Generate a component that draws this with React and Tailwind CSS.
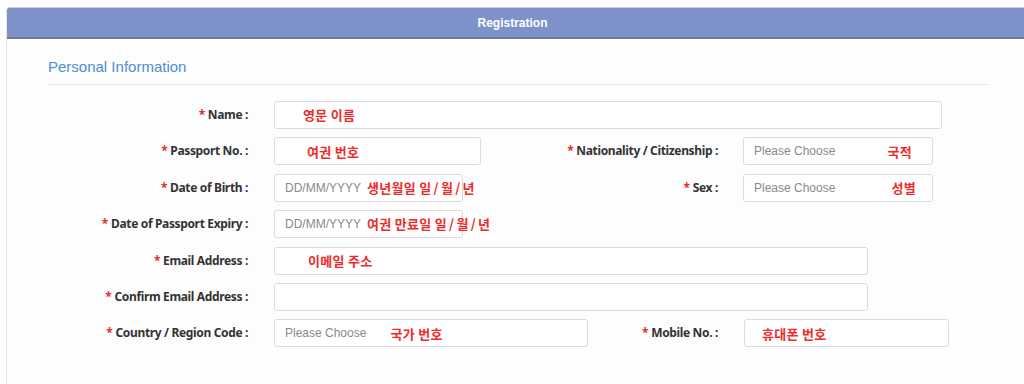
import React from 'react';

const labelFont = { fontFamily: '"Noto Sans", "Noto Sans CJK KR", sans-serif' };

function Label({ children, className = '' }) {
  return (
    <div
      className={`shrink-0 text-right text-[12px] font-bold tracking-[-0.35px] text-[#333] whitespace-nowrap ${className}`}
      style={labelFont}
    >
      <span className="text-[#e03030] mr-[3px]">*</span>
      {children} :
    </div>
  );
}

// red korean hints, slashes get a bit of air like in the reference
function Note({ text }) {
  const parts = text.split('/');
  return parts.map((p, i) => (
    <React.Fragment key={i}>
      {i > 0 && <span className="mx-[2px]">/</span>}
      {p}
    </React.Fragment>
  ));
}

function Field({ className = '', placeholder, note, noteGap = 0, pad = 'pl-[10px]' }) {
  return (
    <div
      className={`shrink-0 h-[28px] flex items-center bg-white border border-[#dcdcdc] rounded-[3px] whitespace-nowrap ${pad} ${className}`}
    >
      {placeholder && (
        <span className="text-[12px] text-[#8a8a8a] font-['Liberation_Sans',Arial,sans-serif]">
          {placeholder}
        </span>
      )}
      {note && (
        <span
          className="text-[13px] font-bold text-[#ee2a2a] tracking-[0.3px] relative z-10"
          style={{ marginLeft: noteGap, fontFamily: '"Noto Sans CJK KR", sans-serif' }}
        >
          <Note text={note} />
        </span>
      )}
    </div>
  );
}

export default function App() {
  return (
    <div className="w-[1024px] h-[384px] overflow-hidden bg-white pt-[7px] pl-[6px]">
      <div className="w-[1040px] h-[400px] bg-[#fdfdfd] border-l border-[#e6e6e6] rounded-tl-[3px]">
        <div className="h-[32px] bg-[#7f91c9] border-t border-[#c9d0e6] border-b-2 border-b-[#6d7aa3] rounded-tl-[3px] flex items-center justify-center pr-[28px]">
          <span className="text-white text-[12px] font-bold font-['Liberation_Sans',Arial,sans-serif]">
            Registration
          </span>
        </div>

        <div className="pl-[41px]">
          <div className="w-[941px] border-b border-[#ececec] pt-[19px] pb-[8px]">
            <h2 className="text-[15px] leading-[18px] text-[#4a8fd0] font-['Liberation_Sans',Arial,sans-serif]">
              Personal Information
            </h2>
          </div>

          <div className="flex flex-col gap-[8.4px] pt-[16px]">
            <div className="flex items-center">
              <Label className="w-[200px]">Name</Label>
              <Field className="ml-[26px] w-[668px]" pad="pl-[28px]" note="영문 이름" />
            </div>

            <div className="flex items-center">
              <Label className="w-[200px]">Passport No.</Label>
              <Field className="ml-[26px] w-[207px]" pad="pl-[32px]" note="여권 번호" />
              <Label className="w-[237px]">Nationality / Citizenship</Label>
              <Field
                className="ml-[25px] w-[190px]"
                placeholder="Please Choose"
                note="국적"
                noteGap={52}
              />
            </div>

            <div className="flex items-center">
              <Label className="w-[200px]">Date of Birth</Label>
              <Field
                className="ml-[26px] w-[189px]"
                placeholder="DD/MM/YYYY"
                note="생년월일 일/월/년"
                noteGap={6}
              />
              <Label className="w-[255px]">Sex</Label>
              <Field
                className="ml-[25px] w-[190px]"
                placeholder="Please Choose"
                note="성별"
                noteGap={56}
              />
            </div>

            <div className="flex items-center">
              <Label className="w-[200px]">Date of Passport Expiry</Label>
              <Field
                className="ml-[26px] w-[189px]"
                placeholder="DD/MM/YYYY"
                note="여권 만료일 일/월/년"
                noteGap={6}
              />
            </div>

            <div className="flex items-center">
              <Label className="w-[200px]">Email Address</Label>
              <Field className="ml-[26px] w-[594px]" pad="pl-[33px]" note="이메일 주소" />
            </div>

            <div className="flex items-center">
              <Label className="w-[200px]">Confirm Email Address</Label>
              <Field className="ml-[26px] w-[594px]" />
            </div>

            <div className="flex items-center">
              <Label className="w-[200px]">Country / Region Code</Label>
              <Field
                className="ml-[26px] w-[314px]"
                placeholder="Please Choose"
                note="국가 번호"
                noteGap={24}
              />
              <Label className="w-[130px]">Mobile No.</Label>
              <Field className="ml-[26px] w-[205px]" pad="pl-[17px]" note="휴대폰 번호" />
            </div>
          </div>
        </div>
      </div>
    </div>
  );
}
